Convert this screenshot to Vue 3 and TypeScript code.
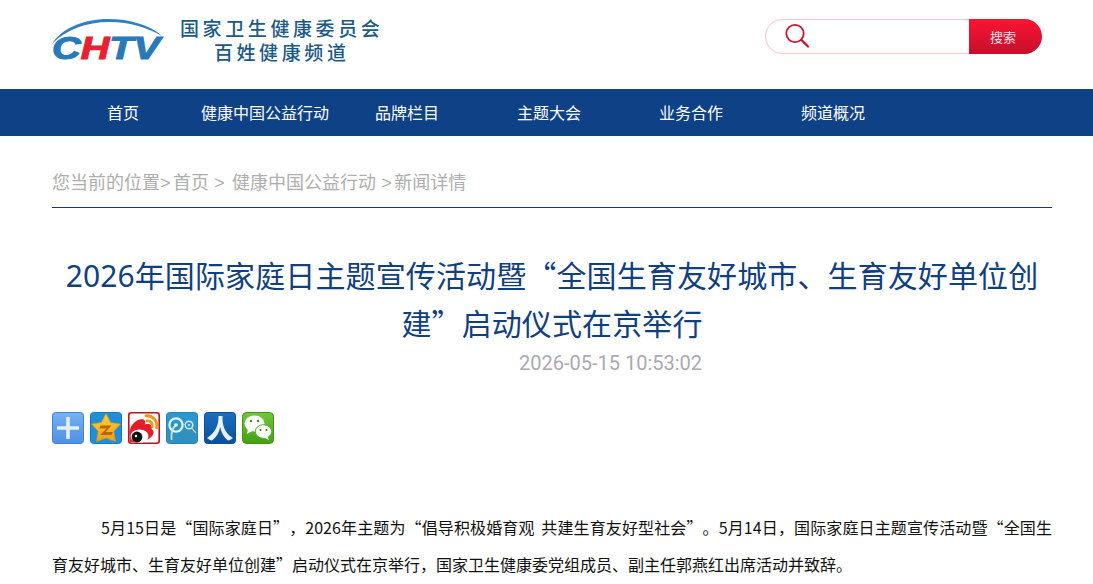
<script setup lang="ts">
const navItems = ['首页', '健康中国公益行动', '品牌栏目', '主题大会', '业务合作', '频道概况'];
</script>

<template>
  <div class="page">
    <header class="top wrap">
      <div class="logo">
        <svg class="logo-mark" width="112" height="46" viewBox="0 0 112 46">
          <path d="M0 26 C10 10 32 1 56 1 C78 1 98 7 110 18 C96 10 78 4 58 4 C34 4 13 12 0 26 Z" fill="#2f7fc1" />
          <text x="0" y="41" textLength="108" lengthAdjust="spacingAndGlyphs" class="logo-text"><tspan fill="#2a78bc" stroke="#2a78bc">C</tspan><tspan fill="#e8202f" stroke="#e8202f">H</tspan><tspan fill="#2a78bc" stroke="#2a78bc">TV</tspan></text>
        </svg>
        <div class="logo-name">
          <div>国家卫生健康委员会</div>
          <div>百姓健康频道</div>
        </div>
      </div>
      <div class="search">
        <div class="search-box">
          <svg width="26" height="26" viewBox="0 0 26 26" fill="none" stroke="#c8162c">
            <circle cx="10" cy="10.5" r="8.7" stroke-width="1.8" />
            <path d="M16.5 17 L23 23.5" stroke-width="2.4" stroke-linecap="round" />
          </svg>
        </div>
        <div class="search-btn">搜索</div>
      </div>
    </header>

    <nav class="nav">
      <div class="wrap nav-row">
        <a v-for="item in navItems" :key="item" class="nav-item">{{ item }}</a>
      </div>
    </nav>

    <main class="wrap">
      <div class="crumb">您当前的位置<span class="sep">&gt;</span>首页 <span class="sep">&gt;</span> 健康中国公益行动 <span class="sep">&gt;</span>新闻详情</div>
      <h1 class="title"><span class="num">2026</span>年国际家庭日主题宣传活动暨“全国生育友好城市、生育友好单位创建”启动仪式在京举行</h1>
      <div class="date">2026-05-15 10:53:02</div>

      <div class="share">
        <!-- 加号 -->
        <svg class="ico" viewBox="0 0 32 32">
          <defs>
            <linearGradient id="gPlus" x1="0" y1="0" x2="0" y2="1">
              <stop offset="0" stop-color="#74b2f2" />
              <stop offset="1" stop-color="#4f8fe4" />
            </linearGradient>
            <linearGradient id="gWx" x1="0" y1="0" x2="0" y2="1">
              <stop offset="0" stop-color="#74c63c" />
              <stop offset="1" stop-color="#43a015" />
            </linearGradient>
            <linearGradient id="gRen" x1="0" y1="0" x2="0" y2="1">
              <stop offset="0" stop-color="#1c6fc0" />
              <stop offset="1" stop-color="#0b4f9c" />
            </linearGradient>
            <linearGradient id="gStar" x1="0" y1="0" x2="0" y2="1">
              <stop offset="0" stop-color="#fcd03a" />
              <stop offset="1" stop-color="#f19f12" />
            </linearGradient>
          </defs>
          <rect x="0.5" y="0.5" width="31" height="31" rx="3" fill="url(#gPlus)" stroke="#4482d6" />
          <path d="M14.2 5 h3.6 v9.2 h9.2 v3.6 h-9.2 v9.2 h-3.6 v-9.2 h-9.2 v-3.6 h9.2 z" fill="#e4f0fd" />
        </svg>
        <!-- QQ空间 -->
        <svg class="ico" viewBox="0 0 32 32">
          <rect x="0.5" y="0.5" width="31" height="31" rx="3" fill="#1f8fdc" stroke="#1a78c0" />
          <path d="M16 1.5 L20.6 10.6 L30.5 12 L23.8 19.2 L25.6 29.5 L16 26 L6.4 29.5 L8.2 19.2 L1.5 12 L11.4 10.6 Z" fill="url(#gStar)" stroke="#e39312" stroke-width="0.6" />
          <path d="M10.5 13.5 h11 L15.5 20 h7.5 l-1.5 3 h-11.5 L16.5 16.5 h-7 z" fill="#b9650f" />
        </svg>
        <!-- 微博 -->
        <svg class="ico" viewBox="0 0 32 32">
          <rect x="0.8" y="0.8" width="30.4" height="30.4" rx="2.5" fill="#fff" stroke="#b8141c" stroke-width="1.6" />
          <path d="M1.5 21 C1.5 15 6 8.5 12 7.5 C16.5 6.8 18 9 17 12.5 C22 11 25.5 13.5 23.5 17 C26.5 18.5 26.5 23 22 26 C18 29 10 30.5 2 30 Z" fill="#e01f2a" />
          <ellipse cx="11.5" cy="24" rx="9" ry="6.6" fill="#fff" />
          <circle cx="9" cy="25" r="5.4" fill="#111" />
          <circle cx="8" cy="24" r="1.2" fill="#fff" />
          <path d="M18 3.8 C25 3.2 30 9 28.6 16 M19 9 C22.5 8.5 25 11.2 24.2 14.6" fill="none" stroke="#f39417" stroke-width="2.8" stroke-linecap="round" />
        </svg>
        <!-- 腾讯微博 -->
        <svg class="ico" viewBox="0 0 32 32">
          <rect x="0.5" y="0.5" width="31" height="31" rx="3" fill="#2b97cf" stroke="#2a82b4" />
          <rect x="1" y="15" width="30" height="16" rx="2" fill="#3090c2" />
          <circle cx="10" cy="13" r="6.6" fill="none" stroke="#e6f4f2" stroke-width="2.2" />
          <path d="M5.5 27 C5 21 7 15.5 10 13" fill="none" stroke="#cfe8c0" stroke-width="1.8" stroke-linecap="round" />
          <circle cx="10" cy="13" r="1.8" fill="#e6f4f2" />
          <circle cx="23" cy="13" r="3.8" fill="none" stroke="#d6ecf0" stroke-width="1.5" />
          <circle cx="23" cy="13" r="1.1" fill="#d6ecf0" />
          <path d="M25.5 16 L30 21" stroke="#b9d98f" stroke-width="1.2" />
        </svg>
        <!-- 人人网 -->
        <svg class="ico" viewBox="0 0 32 32">
          <rect x="0.5" y="0.5" width="31" height="31" rx="3" fill="url(#gRen)" stroke="#0d4d94" />
          <path d="M14.5 4 h4 C18 13 20.5 21 29 26 C27 27.5 25.5 28.2 24 28.5 C20 25.5 17.5 21 16.2 15 C15 21 12 25.5 8 28.5 C6.5 28.2 5 27.5 3 26 C11 21 15 13 14.5 4 Z" fill="#e8f2fb" />
        </svg>
        <!-- 微信 -->
        <svg class="ico" viewBox="0 0 32 32">
          <rect x="0.5" y="0.5" width="31" height="31" rx="4" fill="url(#gWx)" stroke="#3f9416" />
          <ellipse cx="12.5" cy="11.5" rx="10" ry="8" fill="#fff" />
          <path d="M6 16 L5 22 L11 18.5 Z" fill="#fff" />
          <ellipse cx="21.5" cy="19.5" rx="8.2" ry="6.8" fill="#fff" stroke="#57ad22" stroke-width="1" />
          <path d="M25.5 24 L27 28 L22 25.5 Z" fill="#fff" />
          <circle cx="9" cy="9" r="1.2" fill="#3f8a1c" />
          <circle cx="16" cy="9" r="1.2" fill="#3f8a1c" />
          <circle cx="18.5" cy="18" r="1.1" fill="#3f8a1c" />
          <circle cx="24.5" cy="18" r="1.1" fill="#3f8a1c" />
        </svg>
      </div>

      <article class="content">
        <p>5月15日是“国际家庭日”，2026年主题为“倡导积极婚育观 共建生育友好型社会”。5月14日，国际家庭日主题宣传活动暨“全国生育友好城市、生育友好单位创建”启动仪式在京举行，国家卫生健康委党组成员、副主任郭燕红出席活动并致辞。</p>
      </article>
    </main>
  </div>
</template>

<style scoped>
.page {
  font-family: "Noto Sans CJK SC", "Liberation Sans", sans-serif;
  text-spacing-trim: space-all;
  height: 584px;
  overflow: hidden;
  background: #fff;
}

.wrap {
  width: 1000px;
  margin-left: 52px;
}

.top {
  height: 89px;
  display: flex;
  justify-content: space-between;
  align-items: center;
}

.logo {
  display: flex;
  align-items: center;
  margin-top: -7px;
}

.logo-mark {
  display: block;
  overflow: visible;
}

.logo-text {
  font-family: "Liberation Sans", sans-serif;
  font-size: 32px;
  font-weight: 700;
  font-style: italic;
  stroke-width: 1.1px;
}

.logo-name {
  margin-left: 16px;
  margin-top: -2px;
  color: #1c5a86;
  font-size: 19px;
  font-weight: 500;
  line-height: 24px;
  letter-spacing: 3.6px;
  text-align: center;
}

.search {
  display: flex;
  width: 277px;
  height: 35px;
  margin-top: -17px;
  margin-right: 10px;
}

.search-box {
  flex: 1;
  display: flex;
  align-items: center;
  padding-left: 19px;
  border: 1px solid #fcc6cd;
  border-right: 0;
  border-radius: 18px 0 0 18px;
}

.search-btn {
  width: 73px;
  box-sizing: border-box;
  padding-right: 5px;
  display: flex;
  align-items: center;
  justify-content: center;
  color: #fbe3e6;
  font-size: 13px;
  border-radius: 0 18px 18px 0;
  background: linear-gradient(#fb1433, #c5102b);
}

.nav {
  height: 47px;
  background: #0f4186;
}

.nav-row {
  display: flex;
}

.nav-item {
  width: 142px;
  line-height: 47px;
  text-align: center;
  color: #fff;
  font-size: 16px;
}

.crumb {
  height: 72px;
  box-sizing: border-box;
  padding-top: 33px;
  line-height: 25px;
  font-size: 18px;
  word-spacing: 1px;
  color: #aeaeae;
  border-bottom: 1px solid #1a3a6a;
}

.sep {
  font-family: "Liberation Sans", sans-serif;
  letter-spacing: 2.5px;
}

.title {
  margin: 43px 0 0;
  font-size: 30px;
  font-weight: 400;
  line-height: 46px;
  letter-spacing: 0.12px;
  text-align: center;
  color: #11407f;
}

.num {
  font-family: "Noto Sans", sans-serif;
}

.date {
  margin-top: 3px;
  padding-left: 467px;
  font-family: Roboto, sans-serif;
  font-size: 20px;
  line-height: 30px;
  color: #a9a9b4;
}

.share {
  display: flex;
  gap: 6px;
  margin-top: 34px;
}

.ico {
  width: 32px;
  height: 32px;
  display: block;
}

.content {
  margin-top: 65px;
  font-size: 16px;
  line-height: 37px;
  color: #111;
}

.content p {
  margin: 0;
  text-indent: 49px;
  text-align: justify;
  word-spacing: 3px;
}
</style>
